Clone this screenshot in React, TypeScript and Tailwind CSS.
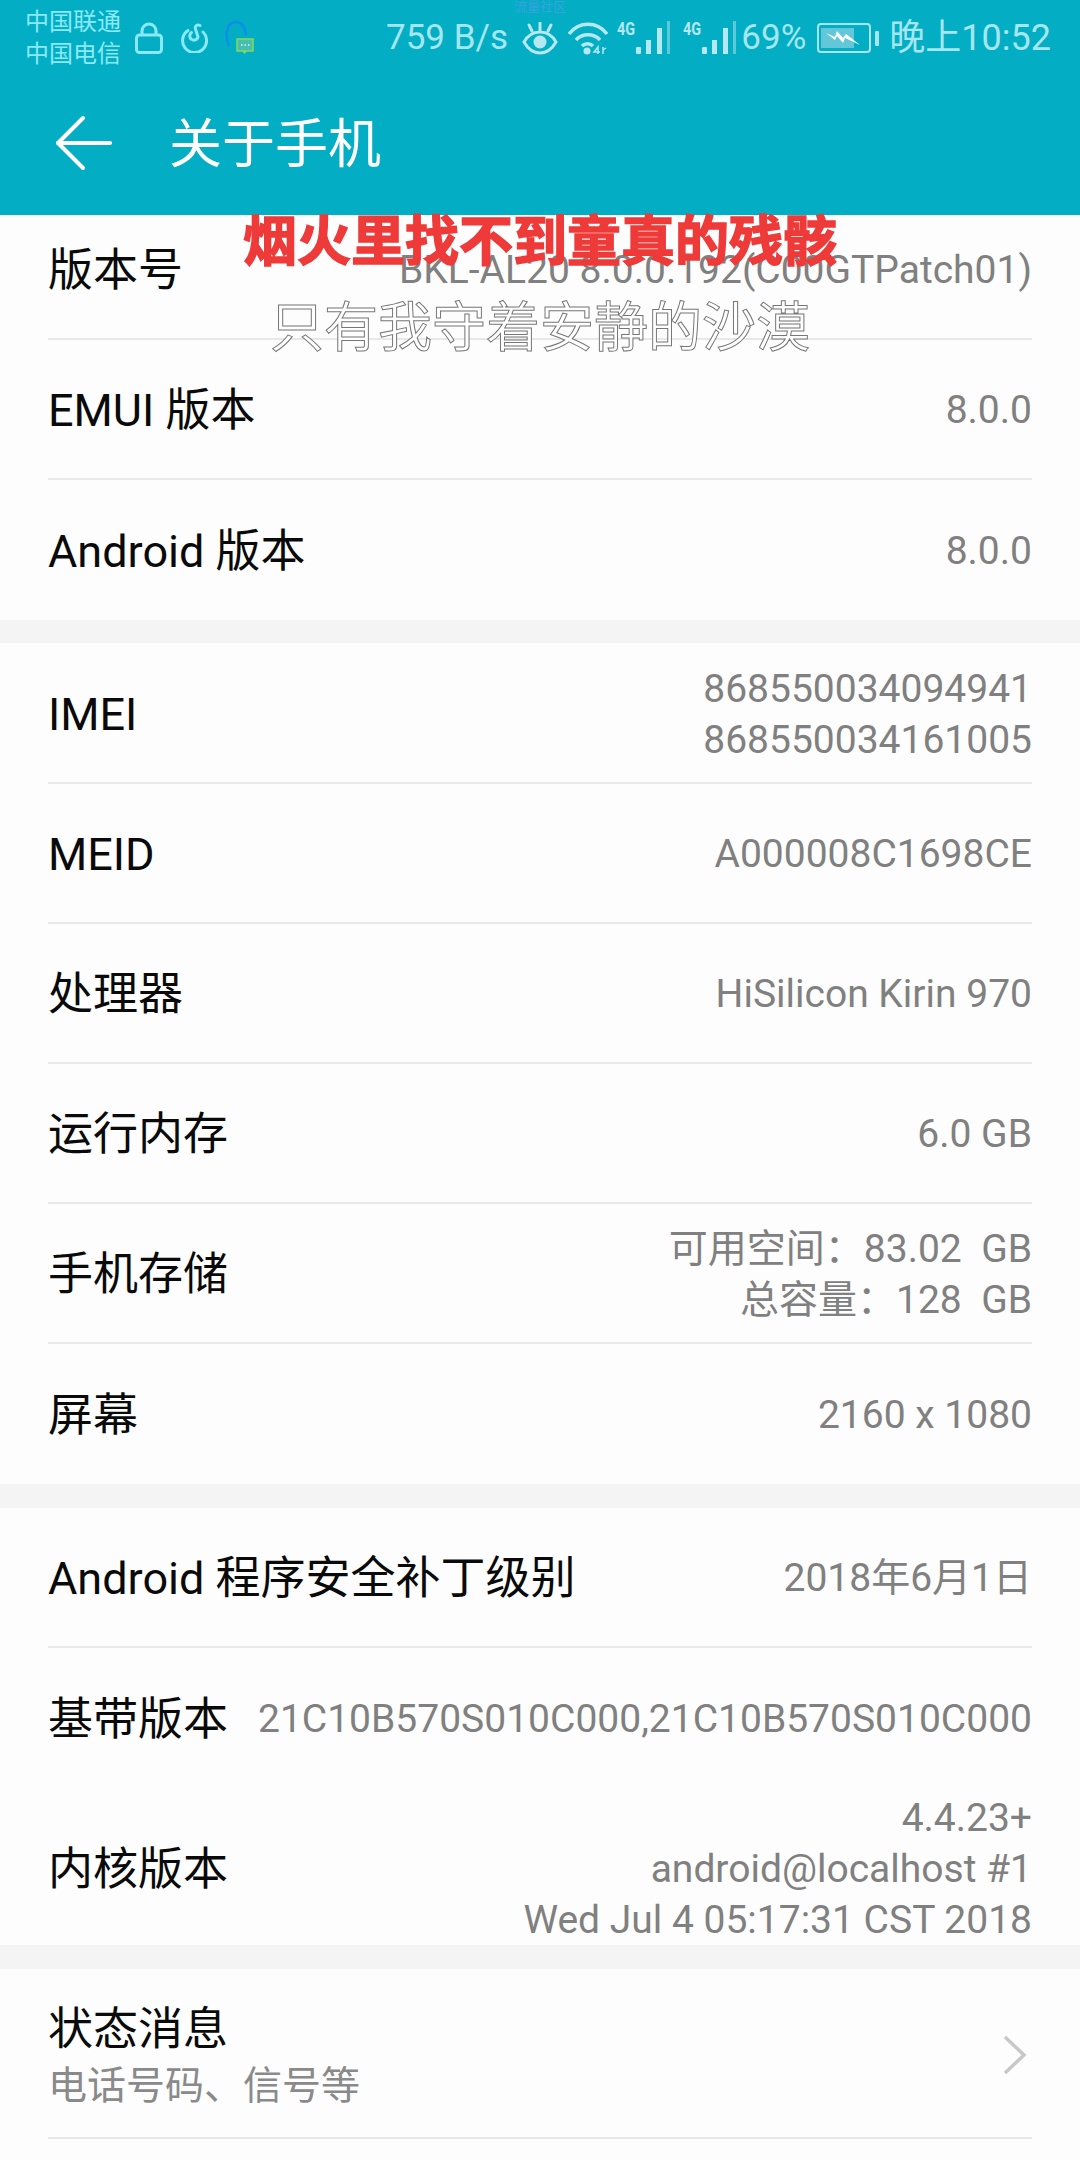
const CJK = "font-['Roboto','Noto_Sans_CJK_SC',sans-serif]";

const Lock = () => (
  <svg width="28" height="32" viewBox="0 0 28 32" fill="none" stroke="#8ae9f5" strokeWidth="3">
    <rect x="1.500" y="13" width="25" height="17.500" rx="3" />
    <path d="M7 13V9a7 7 0 0 1 14 0v4" />
  </svg>
);

const Netease = () => (
  <svg width="28" height="30" viewBox="0 0 28 30" fill="none" stroke="#8ae9f5" strokeWidth="3" strokeLinecap="round">
    <path d="M8 7.500A12 12 0 1 0 23 9" />
    <path d="M20 2.500c-3-1.500-5.500.5-4.500 3.500l2.500 8a4.200 4.200 0 1 1-6.500-4.500" />
  </svg>
);

const ChatBadge = () => (
  <svg width="30" height="36" viewBox="0 0 30 36" fill="none">
    <path d="M4 26C-1 14 2 2 11 2c6 0 9 5 10 13" stroke="#0e8fe6" strokeWidth="2.500" />
    <rect x="12" y="19" width="16" height="12" fill="#46bfae" stroke="#84d95a" strokeWidth="1.500" />
    <path d="M17 31h5l-2.500 3z" fill="#84d95a" />
    <path d="M16 25h1.500M19.500 25h1.500M23 25h1.500" stroke="#d8f5ee" strokeWidth="1.500" />
  </svg>
);

const Eye = () => (
  <svg width="36" height="33" viewBox="0 0 36 33" fill="none" stroke="#b5e8f0" strokeWidth="3" strokeLinecap="round">
    <path d="M2 20c4-7 10-10 16-10s12 3 16 10c-4 7-10 11-16 11S6 27 2 20z" />
    <circle cx="18" cy="20" r="6.500" fill="#b5e8f0" stroke="none" />
    <path d="M7 3l3 6M18 1v7M29 3l-3 6" />
  </svg>
);

const Wifi = () => (
  <svg width="40" height="33" viewBox="0 0 40 33" fill="none" stroke="#b5e8f0" strokeWidth="3.500">
    <path d="M1 12c10-13 28-13 38 0" />
    <path d="M8 18c6-7 18-7 24 0" />
    <path d="M14 24c3-3 8-3 11 0" />
    <circle cx="19" cy="29" r="3.500" fill="#b5e8f0" stroke="none" />
    <path d="M30 32v-7l-4 5h6" strokeWidth="1.500" />
    <path d="M35 25v7M35 28l3-2" strokeWidth="1.500" />
  </svg>
);

const Signal = () => (
  <div className="relative h-[34px] w-[53px]">
    <span className="absolute left-0 top-0 origin-top-left scale-x-[0.8] text-[18px] font-bold leading-[15px] text-[#b5e8f0]">4G</span>
    <svg className="absolute left-0 top-0" width="53" height="34" viewBox="0 0 53 34" fill="#b5e8f0">
      <rect x="19" y="26" width="5" height="7" rx="1" />
      <rect x="29" y="19" width="5" height="14" />
      <rect x="40" y="7" width="5" height="26" />
      <rect x="50" y="0" width="3" height="33" fill="#5cc8d8" />
    </svg>
  </div>
);

const Battery = () => (
  <svg width="62" height="30" viewBox="0 0 62 30" fill="none">
    <rect x="1" y="1" width="52" height="28" rx="3" stroke="#a5e6ef" strokeWidth="2" />
    <rect x="4" y="5" width="33" height="20" fill="#62c8d9" />
    <rect x="58" y="8" width="4" height="15" rx="1" fill="#a5e6ef" />
    <path d="M9 10l9 4 2-6 6 7 3-4 14 11-15-7-2 5-6-7-2 4z" fill="#ffffff" />
  </svg>
);

const ArrowLeft = () => (
  <svg width="58" height="58" viewBox="0 0 58 58" fill="none" stroke="#ffffff" strokeWidth="4" strokeLinecap="round" strokeLinejoin="round">
    <path d="M29 4L4 29l25 25" />
    <path d="M4 29h52" />
  </svg>
);

type Row = { label: string; value: string[] };

const Info = ({ label, value, last, height = 'h-[140px]' }: { label: string; value: string[]; last?: boolean; height?: string }) => (
  <div className={`flex ${height} items-center justify-between pt-[3px] ${last ? '' : 'border-b-2 border-[#e8e8e8]'}`}>
    <span className="whitespace-nowrap text-[45px] leading-none text-[#0a0a0a]">{label}</span>
    <div className="text-right text-[39px] leading-[51px] text-[#808080]">
      {value.map(line => (
        <div key={line} className="whitespace-pre">{line}</div>
      ))}
    </div>
  </div>
);

const Section = ({ rows, className }: { rows: Row[]; className?: string }) => (
  <div className={`bg-[#fdfdfd] px-[48px] ${className ?? ''}`}>
    {rows.map((row, idx) => (
      <Info key={row.label} label={row.label} value={row.value} last={idx === rows.length - 1} />
    ))}
  </div>
);

const App = () => {
  return (
    <div className={`relative h-[2160px] w-[1080px] overflow-hidden bg-[#fdfdfd] ${CJK}`}>
      <header className="relative z-10 h-[215px] bg-[#03aec4]">
        <div className="flex h-[76px] items-center pl-[25px] pr-[29px]">
          <div className="w-[96px] text-[24px] leading-[32px] text-[#8ae9f5]">
            <div>中国联通</div>
            <div>中国电信</div>
          </div>
          <div className="ml-[14px] flex items-center gap-[17px]">
            <Lock />
            <Netease />
            <ChatBadge />
          </div>
          <span className="ml-[131px] text-[35px] text-[#a5e6ef]">759 B/s</span>
          <div className="ml-auto flex items-center">
            <Eye />
            <div className="ml-[10px]"><Wifi /></div>
            <div className="ml-[9px]"><Signal /></div>
            <div className="ml-[13px]"><Signal /></div>
            <span className="ml-[5px] text-[35px] text-[#a5e6ef]">69%</span>
            <div className="ml-[11px]"><Battery /></div>
            <span className="ml-[10px] whitespace-nowrap text-[36px] text-[#a5e6ef]">晚上10:52</span>
          </div>
        </div>
        <div className="flex h-[139px] items-center pb-[6px] pl-[54px]">
          <ArrowLeft />
          <span className="ml-[57px] mt-[6px] text-[53px] leading-none text-white">关于手机</span>
        </div>
      </header>

      <span className="absolute left-[514px] top-0 z-20 text-[13px] leading-none text-[#3aa0e0]">流量社区</span>

      <div className="-mt-[15px]">
        <Section
          rows={[
            { label: '版本号', value: ['BKL-AL20 8.0.0.192(C00GTPatch01)'] },
            { label: 'EMUI 版本', value: ['8.0.0'] },
            { label: 'Android 版本', value: ['8.0.0'] }
          ]}
        />
        <div className="h-[23px] bg-[#f4f4f4]" />
        <Section
          className="pt-[1px]"
          rows={[
            { label: 'IMEI', value: ['868550034094941', '868550034161005'] },
            { label: 'MEID', value: ['A000008C1698CE'] },
            { label: '处理器', value: ['HiSilicon Kirin 970'] },
            { label: '运行内存', value: ['6.0 GB'] },
            { label: '手机存储', value: ['可用空间：83.02  GB', '总容量：128  GB'] },
            { label: '屏幕', value: ['2160 x 1080'] }
          ]}
        />
        <div className="h-[24px] bg-[#f4f4f4]" />
        <Section
          rows={[
            { label: 'Android 程序安全补丁级别', value: ['2018年6月1日'] },
            { label: '基带版本', value: ['21C10B570S010C000,21C10B570S010C000'] }
          ]}
        />
        <div className="border-t-2 border-transparent bg-[#fdfdfd] px-[48px]">
          <Info
            label="内核版本"
            value={['4.4.23+', 'android@localhost #1', 'Wed Jul 4 05:17:31 CST 2018']}
            height="h-[155px]"
            last
          />
        </div>
        <div className="h-[24px] bg-[#f4f4f4]" />
        <div className="bg-[#fdfdfd] px-[48px]">
          <div className="flex h-[170px] items-center justify-between border-b-2 border-[#e8e8e8] pt-[3px]">
            <div>
              <div className="text-[45px] leading-[62px] text-[#0a0a0a]">状态消息</div>
              <div className="text-[39px] leading-[50px] text-[#8a8a8a]">电话号码、信号等</div>
            </div>
            <svg width="24" height="40" viewBox="0 0 24 40" fill="none" stroke="#c8c8c8" strokeWidth="3.500" className="mr-[5px]">
              <path d="M2 2l19 18L2 38" />
            </svg>
          </div>
        </div>
      </div>

      <div className="absolute left-[243px] top-[211px] z-20 whitespace-nowrap text-[54px] font-bold leading-[64px] text-[#ee3a38] [-webkit-text-stroke:1.500px_#ee3a38]">
        烟火里找不到童真的残骸
      </div>
      <div className="absolute left-[270px] top-[297px] z-20 whitespace-nowrap text-[54px] leading-[64px] text-white [-webkit-text-stroke:1px_#777777]">
        只有我守着安静的沙漠
      </div>
    </div>
  );
};

export default App;
